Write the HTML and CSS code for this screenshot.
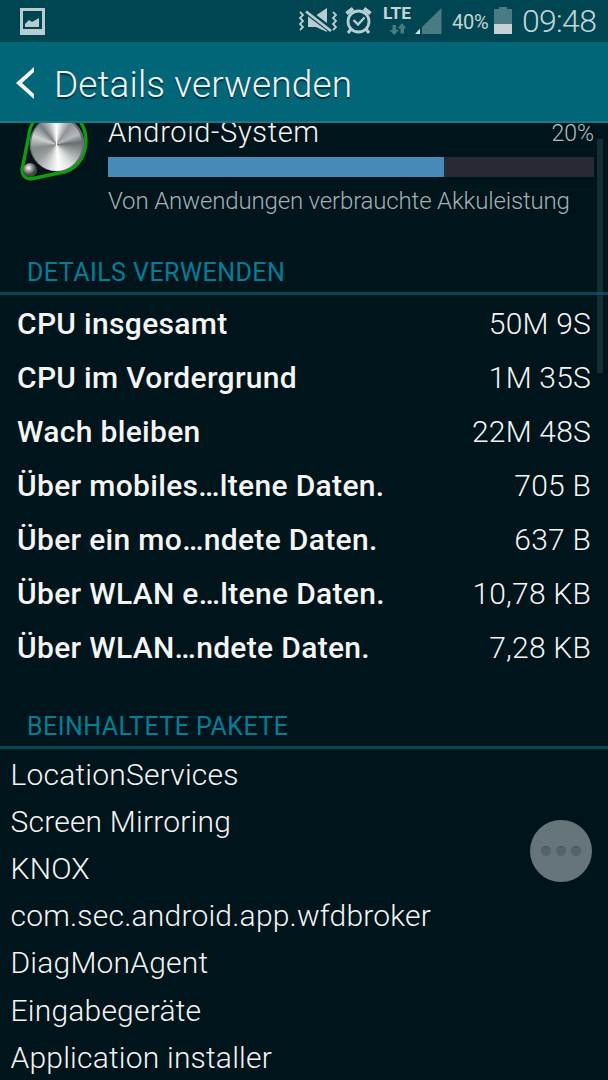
FILE: index.html
```html
<!DOCTYPE html>
<html lang="de">
<head>
  <meta charset="UTF-8" />
  <meta name="viewport" content="width=device-width, initial-scale=1.0"/>
  <title>Details verwenden</title>
  <link rel="stylesheet" href="styles.css">
</head>
<body>

  <div class="status-bar">
    <svg class="icon-picture" width="26" height="28" viewBox="0 0 26 28">
      <path fill="#b9cdd1" fill-rule="evenodd" d="M0 0h25v27H0zM3 3v18h19V3z"/>
      <path fill="#b9cdd1" d="M5 19v-3l4-4 3 2 7-4v9z"/>
    </svg>
    <div class="status-icons">
      <svg width="160" height="42" viewBox="290 0 160 42">
        <!-- vibrate / mute -->
        <g fill="none" stroke="#b9cdd1" stroke-width="1.8">
          <path d="M300 12l3 3-3 3 3 3-3 3 3 3-3 3"/>
          <path d="M333 12l3 3-3 3 3 3-3 3 3 3-3 3"/>
        </g>
        <path fill="#b9cdd1" d="M308 16h7l12-8v24l-11-5h-8z"/>
        <path stroke="#004552" stroke-width="6" d="M306 11l25 19"/>
        <path stroke="#b9cdd1" stroke-width="2.8" d="M306 11.5l25 19.5"/>
        <!-- alarm -->
        <g fill="none" stroke="#b9cdd1">
          <circle cx="358.5" cy="21.5" r="10.5" stroke-width="2.8"/>
          <path stroke-width="2.4" d="M353.5 20l4.5 4.5 6.5-7"/>
          <path stroke-width="3.8" d="M346.5 13.5l6.5-5M370.5 13.5l-6.5-5"/>
          <path stroke-width="3" d="M351 29l-3 4M366 29l3 4"/>
        </g>
        <text class="lte" x="383" y="19" textLength="28" lengthAdjust="spacingAndGlyphs">LTE</text>
        <path fill="#4a7b85" d="M392.5 25h3.5v5h3l-4.7 5-4.8-5h3zM400.5 33.5h3.5v-5h2.5l-4.5-5.5-4.5 5.5h3z"/>
        <path fill="#4a7b85" d="M422 27L441.5 8v26H422z"/>
        <path fill="#d5e0e2" d="M415 34l5-5.5V34z"/>
      </svg>
      <span class="percent">40%</span>
      <svg class="battery" width="20" height="28" viewBox="0 0 20 28">
        <path fill="#4a7b85" d="M1 2h5V0h8v2h5v15H1z"/>
        <path fill="#c4d0d3" d="M1 17h18v10H1z"/>
      </svg>
      <span class="clock">09:48</span>
    </div>
  </div>

  <header>
    <svg class="back" width="20" height="32" viewBox="0 0 20 32">
      <path fill="#f5f5f5" d="M18 0v5L6 16l12 11v5L0 16z"/>
    </svg>
    <h1>Details verwenden</h1>
  </header>

  <main>
    <div class="app">
      <svg class="app-icon" width="72" height="72" viewBox="18 110 72 72">
        <defs>
          <radialGradient id="small" cx="40%" cy="35%">
            <stop offset="0" stop-color="#fff"/>
            <stop offset=".5" stop-color="#999"/>
            <stop offset="1" stop-color="#444"/>
          </radialGradient>
        </defs>
        <path fill="#07141a" stroke="#09a00c" stroke-width="3.4" d="M28.5 137C31 108 62 105 77 118C92 132 88 164 66 171.5L33 178.5C25 180 20.5 174 22.5 167z"/>
        <circle cx="57" cy="144" r="27.5" fill="#65707a"/>
        <foreignObject x="31" y="118" width="51" height="53"><div class="dial"></div></foreignObject>
        <circle cx="30" cy="170" r="7" fill="url(#small)"/>
      </svg>
      <div class="app-info">
        <div class="app-title">
          <span class="name">Android-System</span>
          <span class="share">20%</span>
        </div>
        <div class="bar"><div class="bar-fill"></div></div>
        <p>Von Anwendungen verbrauchte Akkuleistung</p>
      </div>
    </div>

    <h2>DETAILS VERWENDEN</h2>
    <div class="details">
      <div class="row"><b>CPU insgesamt</b><span>50M 9S</span></div>
      <div class="row"><b>CPU im Vordergrund</b><span>1M 35S</span></div>
      <div class="row"><b>Wach bleiben</b><span>22M 48S</span></div>
      <div class="row"><b>Über mobiles…ltene Daten.</b><span>705 B</span></div>
      <div class="row"><b>Über ein mo…ndete Daten.</b><span>637 B</span></div>
      <div class="row"><b>Über WLAN e…ltene Daten.</b><span>10,78 KB</span></div>
      <div class="row"><b>Über WLAN…ndete Daten.</b><span>7,28 KB</span></div>
    </div>

    <h2 class="packages-title">BEINHALTETE PAKETE</h2>
    <ul>
      <li>LocationServices</li>
      <li>Screen Mirroring</li>
      <li>KNOX</li>
      <li>com.sec.android.app.wfdbroker</li>
      <li>DiagMonAgent</li>
      <li>Eingabegeräte</li>
      <li>Application installer</li>
    </ul>
    <div class="scrollbar"></div>
  </main>

  <div class="bubble"><i></i><i></i><i></i></div>

</body>
</html>
```
FILE: styles.css
```css
* {
  box-sizing: border-box;
}

body {
  margin: 0;
  height: 1080px;
  overflow: hidden;
  display: flex;
  flex-direction: column;
  position: relative;
  background: #00141b;
  color: #f5f5f5;
  font-family: Roboto, sans-serif;
  font-weight: 300;
}

.status-bar {
  flex: none;
  height: 42px;
  display: flex;
  justify-content: space-between;
  background: #004552;
  color: #c4d3d6;
}

.icon-picture {
  margin: 8px 0 0 20px;
}

.status-icons {
  display: flex;
  padding-right: 12px;
}

.lte {
  font-size: 17px;
  font-weight: 700;
  fill: #c4d3d6;
}

.percent {
  width: 41px;
  padding-left: 2px;
  font-size: 20px;
  line-height: 44px;
  font-weight: 400;
  letter-spacing: -0.2px;
}

.battery {
  margin: 7px 9px 0 2px;
}

.clock {
  width: 74px;
  font-size: 32px;
  line-height: 42px;
  letter-spacing: -0.7px;
  white-space: nowrap;
}

header {
  flex: none;
  height: 81px;
  display: flex;
  align-items: center;
  background: #006678;
  border-bottom: 2px solid #207583;
}

.back {
  margin: 2px 18px 0 16px;
}

h1 {
  margin: 5px 0 0;
  font-size: 37px;
  font-weight: 300;
  letter-spacing: 0.1px;
  text-shadow: 0 2px 1px #00323d;
}

main {
  flex: 1;
  position: relative;
  overflow: hidden;
}

.app {
  display: flex;
  height: 114px;
  padding: 0 14px 0 18px;
}

.app-icon {
  flex: none;
  margin-top: -13px;
}

.dial {
  width: 51px;
  height: 53px;
  border-radius: 50%;
  background: conic-gradient(#fff 0deg, #8e9496 35deg, #b5b9bb 65deg, #686e70 85deg, #a0a4a6 115deg, #ddd 145deg, #fff 175deg, #c8caca 205deg, #999e9f 230deg, #85898b 260deg, #d0d2d2 290deg, #777d7f 320deg, #fff 360deg);
}

.app-info {
  flex: 1;
  margin-left: 18px;
}

.app-title {
  display: flex;
  justify-content: space-between;
  height: 34px;
}

.name {
  margin-top: -11px;
  font-size: 29px;
  line-height: 40px;
  letter-spacing: 0.65px;
}

.share {
  font-size: 23px;
  line-height: 22px;
  color: #b4bdc0;
}

.bar {
  height: 20px;
  background: #282a33;
}

.bar-fill {
  width: 69.1%;
  height: 20px;
  background: #478aba;
}

.app p {
  margin: 10px 0 0;
  font-size: 24px;
  line-height: 28px;
  letter-spacing: -0.16px;
  color: #a6b0b3;
  white-space: nowrap;
}

h2 {
  margin: 0 0 2px;
  height: 58px;
  padding: 21px 0 0 27px;
  border-bottom: 3px solid #064653;
  font-size: 25px;
  line-height: 30px;
  font-weight: 400;
  letter-spacing: 0.45px;
  color: #007f98;
}

.row {
  display: flex;
  justify-content: space-between;
  padding: 0 17px;
  font-size: 30px;
  line-height: 54px;
  letter-spacing: 0.2px;
  white-space: nowrap;
}

.row b {
  font-weight: 500;
  letter-spacing: 0.32px;
}

.packages-title {
  height: 74px;
  padding-top: 37px;
}

ul {
  margin: -0.5px 0 0;
  padding: 0 0 0 10.5px;
  list-style: none;
  font-size: 30px;
  line-height: 47.2px;
  letter-spacing: 0.2px;
}

/* overlays */
.scrollbar {
  position: absolute;
  top: 16px;
  right: 5px;
  width: 6px;
  height: 234px;
  background: rgba(50, 85, 95, 0.4);
}

.bubble {
  position: absolute;
  left: 530px;
  top: 820px;
  width: 62px;
  height: 62px;
  display: flex;
  align-items: center;
  justify-content: center;
  gap: 5px;
  border-radius: 50%;
  background: #66757a;
}

.bubble i {
  width: 10px;
  height: 10px;
  border-radius: 50%;
  background: #556368;
  border-top: 1px solid #465459;
}
```
